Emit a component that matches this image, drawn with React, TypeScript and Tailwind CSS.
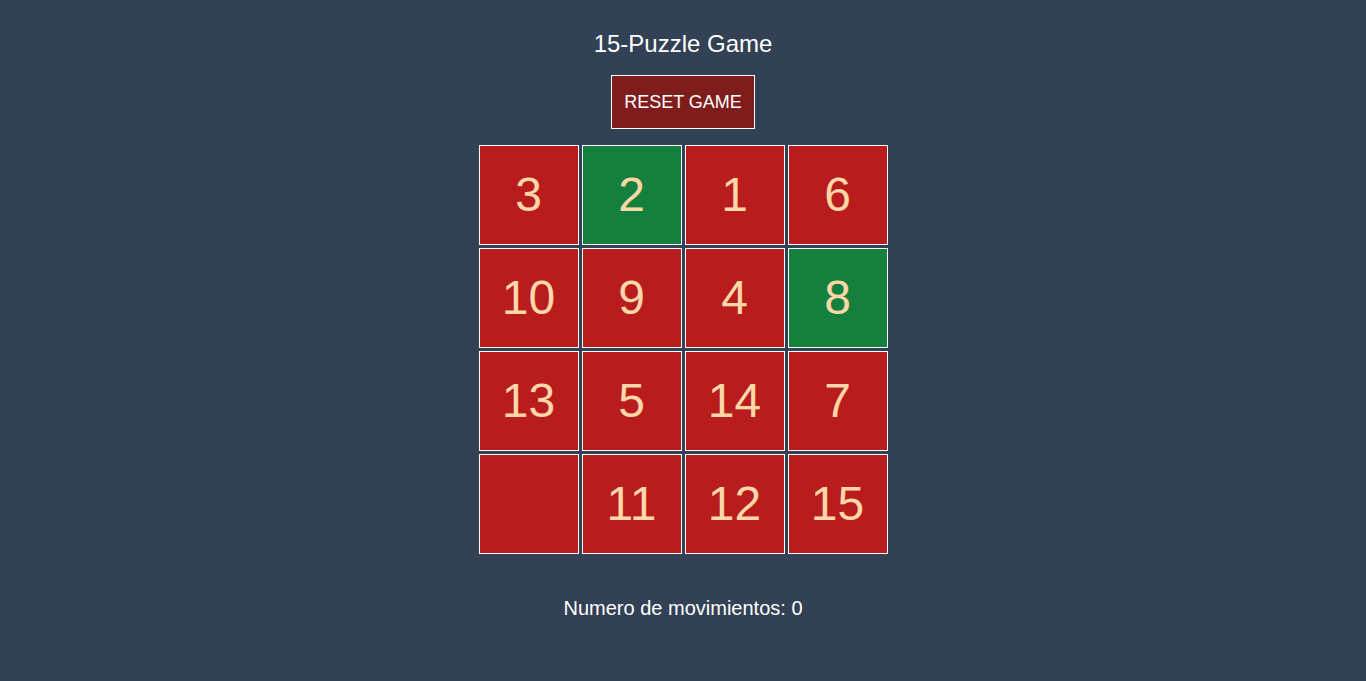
const tiles = [3, 2, 1, 6, 10, 9, 4, 8, 13, 5, 14, 7, 0, 11, 12, 15];

export default function App() {
  const moves = 0;

  return (
    <div
      className="min-h-screen bg-[#334155] flex flex-col items-center pt-[28px] text-white"
      style={{ fontFamily: '"Liberation Sans", Arial, sans-serif' }}
    >
      <h1 className="text-2xl h-8 leading-8 mb-[15px]">15-Puzzle Game</h1>
      <button className="bg-[#7f1d1d] border border-white text-lg leading-7 px-3 py-3 mb-4">
        RESET GAME
      </button>

      {/* board */}
      <div className="grid grid-cols-4 gap-[3px]">
        {tiles.map((n, i) => (
          <div
            key={i}
            className={`w-[100px] h-[100px] border border-white flex items-center justify-center text-5xl text-orange-200 ${
              n === i + 1 ? "bg-[#15803d]" : "bg-[#b91c1c]"
            }`}
          >
            {n !== 0 ? n : ""}
          </div>
        ))}
      </div>

      <p className="text-xl leading-7 mt-10">Numero de movimientos: {moves}</p>
    </div>
  );
}
